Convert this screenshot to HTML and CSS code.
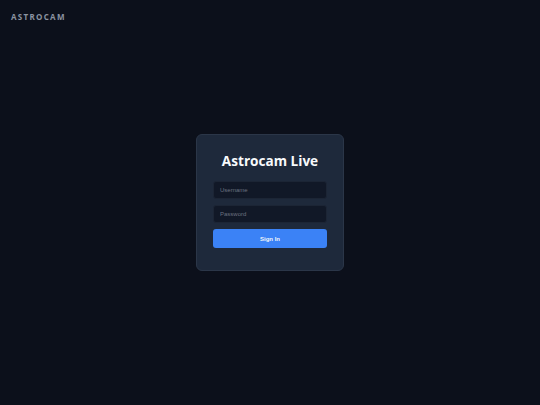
FILE: index.html
```html
<!DOCTYPE html>
<html>
<head>
<meta charset="utf-8">
<link rel="stylesheet" href="styles.css">
</head>
<body>
<header class="top">ASTROCAM</header>
<main class="stage">
  <form class="card">
    <h1 class="title">Astrocam Live</h1>
    <input class="field" type="text" placeholder="Username">
    <input class="field" type="password" placeholder="Password">
    <button class="btn" type="button">Sign In</button>
  </form>
</main>
</body>
</html>
```
FILE: styles.css
```css
* { box-sizing: border-box; }
html, body { margin: 0; height: 100%; }
body {
  background: #0c101b;
  font-family: "Open Sans", "Liberation Sans", sans-serif;
  color: #f1f5f9;
  display: flex;
  flex-direction: column;
}
.top {
  padding: 11px 11px 0;
  font-size: 8px;
  font-weight: 700;
  letter-spacing: 1.3px;
  color: #8b93a1;
  line-height: 11px;
}
.stage {
  flex: 1;
  display: flex;
  align-items: flex-start;
  justify-content: center;
  padding-top: 112px;
}
.card {
  width: 148px;
  height: 137px;
  background: #1e293b;
  border: 1px solid #2b3648;
  border-radius: 6px;
  padding: 16px 16px 0;
  display: flex;
  flex-direction: column;
  align-items: center;
  gap: 6px;
}
.title {
  margin: 0 0 4px;
  font-size: 13.6px;
  font-weight: 700;
  line-height: 20px;
  color: #f8fafc;
}
.field {
  width: 114px;
  height: 18px;
  flex: none;
  background: #111827;
  border: 1px solid #1c2535;
  border-radius: 3px;
  padding: 0 6px;
  font-family: "Liberation Sans", Arial, sans-serif;
  font-size: 6px;
  color: #e5e7eb;
  outline: none;
}
.field::placeholder { color: #6b7280; }
.btn {
  width: 114px;
  height: 19px;
  flex: none;
  background: #3b82f6;
  border: none;
  border-radius: 3px;
  color: #f1f5f9;
  font-family: "Liberation Sans", Arial, sans-serif;
  font-size: 6px;
  font-weight: 700;
}
```
